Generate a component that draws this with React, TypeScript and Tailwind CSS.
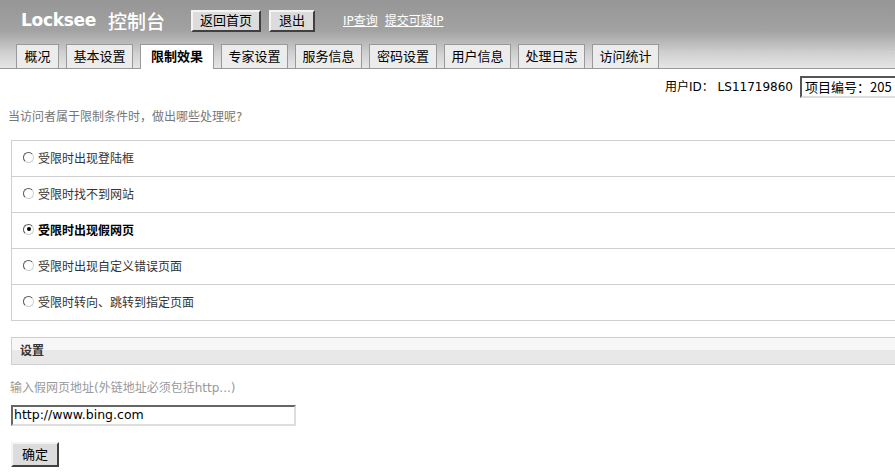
import React from "react";

const FONT = '"DejaVu Sans", "Noto Sans CJK SC", sans-serif';

const tabs: { label: string; w: string; active?: boolean }[] = [
  { label: "概况", w: "w-[43px]" },
  { label: "基本设置", w: "w-[67px]" },
  { label: "限制效果", w: "w-[74px]", active: true },
  { label: "专家设置", w: "w-[67px]" },
  { label: "服务信息", w: "w-[67px]" },
  { label: "密码设置", w: "w-[68px]" },
  { label: "用户信息", w: "w-[67px]" },
  { label: "处理日志", w: "w-[67px]" },
  { label: "访问统计", w: "w-[67px]" },
];

const options = [
  "受限时出现登陆框",
  "受限时找不到网站",
  "受限时出现假网页",
  "受限时出现自定义错误页面",
  "受限时转向、跳转到指定页面",
];

function Radio({ checked }: { checked?: boolean }) {
  return (
    <span className="w-[11px] h-[11px] rounded-full border border-t-[#555] border-l-[#555] border-r-[#d0d0d0] border-b-[#d0d0d0] bg-white flex items-center justify-center shrink-0 mb-[3px]">
      {checked && <span className="w-[4px] h-[4px] rounded-full bg-black" />}
    </span>
  );
}

export default function App() {
  return (
    <div className="w-[895px] h-[472px] overflow-hidden bg-white">
      <div className="w-[905px] text-[12px] text-[#333]" style={{ fontFamily: FONT }}>
        {/* Header */}
        <div className="h-[69px] bg-[linear-gradient(to_bottom,#969696_0%,#a2a2a2_45%,#d2d2d2_80%,#e6e6e6_100%)] border-b border-[#999] flex flex-col">
          <div className="flex items-center h-[43px] pl-[21px] pb-[2px]">
            <span className="text-white font-bold text-[17px] tracking-[-0.3px] leading-none">Locksee</span>
            <span className="text-white text-[19px] font-medium leading-none ml-[12px]" style={{ fontFamily: '"Noto Sans CJK SC", sans-serif' }}>控制台</span>
            <button className="ml-[26px] w-[70px] h-[22px] bg-[#dcdcdc] border-2 border-t-[#f4f4f4] border-l-[#f4f4f4] border-r-[#404040] border-b-[#404040] text-[13px] text-black leading-none">返回首页</button>
            <button className="ml-[8px] w-[46px] h-[22px] bg-[#dcdcdc] border-2 border-t-[#f4f4f4] border-l-[#f4f4f4] border-r-[#404040] border-b-[#404040] text-[13px] text-black leading-none">退出</button>
            <a className="ml-[28px] text-white underline text-[12px]">IP查询</a>
            <a className="ml-[7px] text-white underline text-[12px]">提交可疑IP</a>
          </div>
          <div className="flex-1 flex items-end pl-[16px] gap-[7px] bg-[linear-gradient(to_right,#d6d6d6_50%,transparent_50%)] bg-[length:3px_1px] bg-repeat-x bg-[position:0_8px]">
            {tabs.map((t) => (
              <div
                key={t.label}
                className={
                  t.active
                    ? `${t.w} h-[25px] -mb-[1px] bg-white border border-b-0 border-[#999] flex items-center justify-center text-[13px] font-bold text-black`
                    : `${t.w} h-[24px] bg-[#ececec] border border-b-0 border-[#999] flex items-center justify-center text-[13px] text-black`
                }
              >
                {t.label}
              </div>
            ))}
          </div>
        </div>

        {/* User row */}
        <div className="flex justify-end items-center mt-[7px] pr-[2px]">
          <span className="text-[12px] text-black mr-[7px]">用户ID： LS11719860</span>
          <div
            className="w-[103px] h-[22px] border-2 border-t-[#555] border-l-[#555] border-r-[#ddd] border-b-[#ddd] flex items-center pl-[3px] text-[13px] text-black bg-white whitespace-nowrap"
            style={{ fontFamily: '"Noto Sans CJK SC", sans-serif' }}
          >
            项目编号：205
          </div>
        </div>

        {/* Question */}
        <div className="mt-[12px] pl-[8px] text-[#777] text-[12px] leading-[15px]">当访问者属于限制条件时，做出哪些处理呢?</div>

        {/* Options table */}
        <div className="ml-[11px] mr-[2px] mt-[15px] border-t border-l border-[#cfcfcf]">
          {options.map((o, i) => (
            <div key={o} className="h-[36px] border-b border-[#cfcfcf] flex items-center pl-[11px] gap-[4px]">
              <Radio checked={i === 2} />
              <span className={i === 2 ? "font-bold text-black" : "text-[#333]"}>{o}</span>
            </div>
          ))}
        </div>

        {/* Settings header */}
        <div className="ml-[11px] mr-[2px] mt-[16px] h-[28px] border border-[#cfcfcf] bg-[linear-gradient(to_bottom,#f7f7f7_0%,#f7f7f7_45%,#e8e8e8_45%,#e8e8e8_100%)] flex items-center pl-[8px]">
          <span className="font-bold text-[12px] text-[#333]">设置</span>
        </div>

        <div className="mt-[16px] pl-[10px] text-[#999] text-[12px] leading-[15px]">输入假网页地址(外链地址必须包括http...)</div>

        <div className="mt-[9px] ml-[11px] w-[285px] h-[21px] border-2 border-t-[#666] border-l-[#666] border-r-[#ddd] border-b-[#ddd] flex items-center pl-[1px] text-[12.5px] text-black bg-white">
          http://www.bing.com
        </div>

        <button className="mt-[16px] ml-[11px] w-[48px] h-[25px] bg-[#dcdcdc] border-2 border-t-[#f4f4f4] border-l-[#f4f4f4] border-r-[#404040] border-b-[#404040] text-[13px] text-black leading-none">确定</button>
      </div>
    </div>
  );
}
